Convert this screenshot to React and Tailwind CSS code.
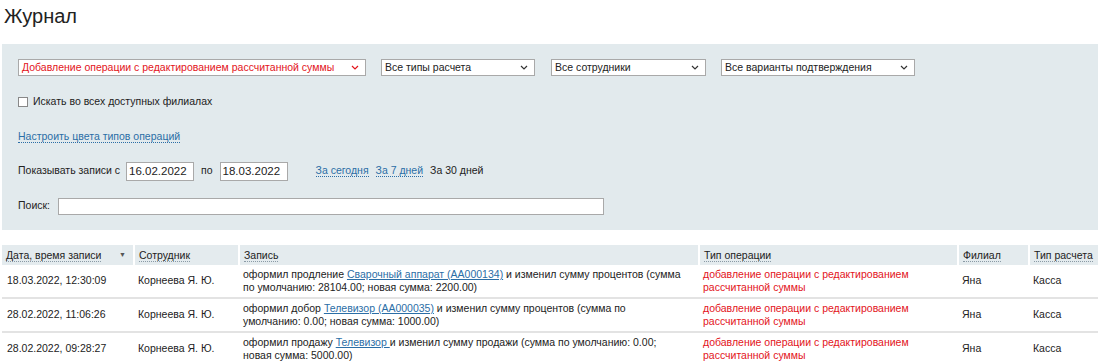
// App.jsx
const FONT = { fontFamily: '"Liberation Sans", Arial, sans-serif' };

const rows = [
  {
    date: "18.03.2022, 12:30:09",
    who: "Корнеева Я. Ю.",
    pre: "оформил продление ",
    link: "Сварочный аппарат (АА000134)",
    post: " и изменил сумму процентов (сумма по умолчанию: 28104.00; новая сумма: 2200.00)",
  },
  {
    date: "28.02.2022, 11:06:26",
    who: "Корнеева Я. Ю.",
    pre: "оформил добор ",
    link: "Телевизор (АА000035)",
    post: " и изменил сумму процентов (сумма по умолчанию: 0.00; новая сумма: 1000.00)",
  },
  {
    date: "28.02.2022, 09:28:27",
    who: "Корнеева Я. Ю.",
    pre: "оформил продажу ",
    link: "Телевизор ",
    post: "и изменил сумму продажи (сумма по умолчанию: 0.00; новая сумма: 5000.00)",
  },
];

function Select({ label, width, red }) {
  return (
    <div
      className={`flex items-center justify-between h-[17px] bg-white border border-[#a9a9a9] pl-[3px] pr-[6px] ${width}`}
    >
      <span className={`text-[10.5px] leading-none whitespace-nowrap ${red ? "text-[#e3141b]" : "text-[#222]"}`}>
        {label}
      </span>
      <svg width="8" height="5" viewBox="0 0 8 5" className={`shrink-0 ${red ? "text-[#e3141b]" : "text-[#333]"}`}>
        <path d="M1 1l3 3 3-3" fill="none" stroke="currentColor" strokeWidth="1.2" />
      </svg>
    </div>
  );
}

function DotLink({ children }) {
  return (
    <span className="text-[#2b6ea6] border-b border-dotted border-[#2b6ea6] leading-[13px] cursor-pointer">
      {children}
    </span>
  );
}

function Th({ children, arrow }) {
  return (
    <th className="text-left font-normal px-[4px] border-r-2 border-white last:border-r-0 h-[20px] whitespace-nowrap">
      <div className="flex items-center justify-between">
        <span className="border-b border-dotted border-[#8a9aa5] leading-[12px] text-[#222]">{children}</span>
        {arrow && <span className="text-[7px] text-[#555] mr-[3px]">▼</span>}
      </div>
    </th>
  );
}

export default function App() {
  return (
    <div className="bg-white w-[1100px] h-[363px] overflow-hidden px-[2px] text-[10.5px] text-[#222]" style={FONT}>
      <h1 className="text-[20px] leading-none pt-[6px] pl-[2px] text-[#222]">Журнал</h1>

      {/* filter panel */}
      <div className="mt-[18px] bg-[#e2eaed] pl-[16px] pt-[15px] h-[186px]">
        <div className="flex items-center">
          <Select label="Добавление операции с редактированием рассчитанной суммы" width="w-[348px]" red />
          <div className="ml-[15px]"><Select label="Все типы расчета" width="w-[154px]" /></div>
          <div className="ml-[16px]"><Select label="Все сотрудники" width="w-[155px]" /></div>
          <div className="ml-[15px]"><Select label="Все варианты подтверждения" width="w-[194px]" /></div>
        </div>

        <label className="flex items-center mt-[18px] gap-[5px]">
          <span className="w-[10px] h-[10px] bg-white border border-[#888] inline-block" />
          <span>Искать во всех доступных филиалах</span>
        </label>

        <div className="mt-[19px]">
          <DotLink>Настроить цвета типов операций</DotLink>
        </div>

        <div className="flex items-center mt-[17px]">
          <span>Показывать записи с</span>
          <div className="ml-[6px] w-[68px] h-[19px] bg-white border border-[#a9a9a9] text-[11.5px] leading-[17px] pl-[2px]">16.02.2022</div>
          <span className="ml-[7px]">по</span>
          <div className="ml-[7px] w-[68px] h-[19px] bg-white border border-[#a9a9a9] text-[11.5px] leading-[17px] pl-[2px]">18.03.2022</div>
          <span className="ml-[28px]"><DotLink>За сегодня</DotLink></span>
          <span className="ml-[7px]"><DotLink>За 7 дней</DotLink></span>
          <span className="ml-[7px]">За 30 дней</span>
        </div>

        <div className="flex items-center mt-[17px]">
          <span>Поиск:</span>
          <div className="ml-[8px] w-[546px] h-[17px] bg-white border border-[#a9a9a9]" />
        </div>
      </div>

      {/* table */}
      <table className="mt-[15px] w-[1096px] table-fixed border-collapse">
        <colgroup>
          <col className="w-[132px]" />
          <col className="w-[105px]" />
          <col className="w-[460px]" />
          <col className="w-[259px]" />
          <col className="w-[71px]" />
          <col />
        </colgroup>
        <thead>
          <tr className="bg-[#e4ebee]">
            <Th arrow>Дата, время записи</Th>
            <Th>Сотрудник</Th>
            <Th>Запись</Th>
            <Th>Тип операции</Th>
            <Th>Филиал</Th>
            <Th>Тип расчета</Th>
          </tr>
        </thead>
        <tbody>
          {rows.map((r) => (
            <tr key={r.date} className="border-b-2 border-[#e3e3e3] align-middle">
              <td className="px-[5px] h-[33px]">{r.date}</td>
              <td className="px-[4px]">{r.who}</td>
              <td className="pl-[4px] pr-[14px] py-[3px] leading-[13px]">
                {r.pre}
                <span className="text-[#2b6ea6] underline">{r.link}</span>
                {r.post}
              </td>
              <td className="px-[4px] leading-[13px] text-[#e3141b]">
                добавление операции с редактированием рассчитанной суммы
              </td>
              <td className="px-[4px]">Яна</td>
              <td className="px-[4px]">Касса</td>
            </tr>
          ))}
        </tbody>
      </table>
    </div>
  );
}
